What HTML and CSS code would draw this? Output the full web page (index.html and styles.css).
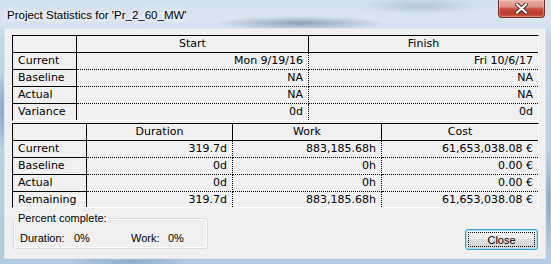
FILE: index.html
```html
<!DOCTYPE html>
<html lang="en">
<head>
<meta charset="utf-8">
<title>Project Statistics</title>
<link rel="stylesheet" href="styles.css">
</head>
<body>
<div class="window">
  <header class="titlebar">
    <span class="title">Project Statistics for 'Pr_2_60_MW'</span>
    <button class="close-x" aria-label="Close window">
      <svg width="13" height="11" viewBox="0 0 13 11">
        <path d="M2 1.5 L11 9.5 M11 1.5 L2 9.5" stroke="#3a2a28" stroke-width="3.8" stroke-linecap="square"/>
        <path d="M2 1.5 L11 9.5 M11 1.5 L2 9.5" stroke="#ffffff" stroke-width="2.1" stroke-linecap="square"/>
      </svg>
    </button>
  </header>
  <main class="client">
    <div class="grid g-dates">
      <div class="l h"></div><div class="h">Start</div><div class="h last">Finish</div>
      <div class="l">Current</div><div class="v">Mon 9/19/16</div><div class="v last">Fri 10/6/17</div>
      <div class="l">Baseline</div><div class="v">NA</div><div class="v last">NA</div>
      <div class="l">Actual</div><div class="v">NA</div><div class="v last">NA</div>
      <div class="l end">Variance</div><div class="v end">0d</div><div class="v last end">0d</div>
    </div>
    <div class="grid g-work">
      <div class="l h"></div><div class="h">Duration</div><div class="h">Work</div><div class="h last">Cost</div>
      <div class="l">Current</div><div class="v">319.7d</div><div class="v">883,185.68h</div><div class="v last">61,653,038.08 €</div>
      <div class="l">Baseline</div><div class="v">0d</div><div class="v">0h</div><div class="v last">0.00 €</div>
      <div class="l">Actual</div><div class="v">0d</div><div class="v">0h</div><div class="v last">0.00 €</div>
      <div class="l end">Remaining</div><div class="v end">319.7d</div><div class="v end">883,185.68h</div><div class="v last end">61,653,038.08 €</div>
    </div>
    <div class="bottom">
      <fieldset class="group">
        <legend>Percent complete:</legend>
        <div class="pc-row">
          <span class="pc-k1">Duration:</span><span class="pc-v1">0%</span><span class="pc-k2">Work:</span><span>0%</span>
        </div>
      </fieldset>
      <button class="btn">Close</button>
    </div>
  </main>
</div>
</body>
</html>
```
FILE: styles.css
```css
* { box-sizing: border-box; }
html, body { margin: 0; padding: 0; }
body {
  width: 551px;
  height: 264px;
  overflow: hidden;
  font-family: "Liberation Sans", Arial, sans-serif;
  background:
    radial-gradient(ellipse 85px 7px at 300px 23px, rgba(60, 80, 115, 0.45), rgba(60, 80, 115, 0) 100%),
    radial-gradient(ellipse 60px 8px at 420px 6px, rgba(90, 110, 140, 0.25), rgba(90, 110, 140, 0) 100%),
    radial-gradient(ellipse 6px 40px at 2px 110px, rgba(70, 110, 160, 0.45), rgba(70, 110, 160, 0) 100%),
    radial-gradient(ellipse 60px 6px at 130px 262px, rgba(80, 120, 170, 0.4), rgba(80, 120, 170, 0) 100%),
    radial-gradient(ellipse 6px 50px at 549px 200px, rgba(70, 110, 160, 0.4), rgba(70, 110, 160, 0) 100%),
    linear-gradient(180deg, #d2dfed 0px, #dbe5f0 20px, #c3d4e7 40px, #b6cae0 264px);
}
.window {
  display: flex;
  flex-direction: column;
  height: 264px;
}
.titlebar {
  height: 28px;
  display: flex;
  align-items: flex-start;
  flex: none;
}
.title {
  flex: 1;
  padding: 2px 0 0 7px;
  line-height: 26px;
  font-size: 11.5px;
  color: #000;
  white-space: nowrap;
  text-shadow: 0 0 5px #fff, 0 0 9px rgba(255, 255, 255, 0.9);
}
.close-x {
  width: 47px;
  height: 18px;
  margin-right: 6px;
  padding: 0;
  border: 1px solid #6e3129;
  border-top: 0;
  border-radius: 0 0 4px 4px;
  background: linear-gradient(180deg, #eab0a3 0%, #dd9080 42%, #c85442 50%, #b9392b 78%, #cc5a40 100%);
  box-shadow: inset 0 0 0 1px rgba(255, 220, 210, 0.35);
  display: flex;
  align-items: center;
  justify-content: center;
}
.close-x svg { display: block; margin-top: -1px; }
.client {
  flex: 1;
  margin: 0 5px 5px 4px;
  border: 1px solid #dfe5ec;
  background: #f0f0f0;
  padding: 6px 6px 0 7px;
}
.grid {
  display: grid;
  width: 527px;
  background: #f0f0f0;
  border-top: 1px solid #000;
  border-left: 1px solid #000;
  border-right: 1px solid #fff;
  border-bottom: 1px solid #fff;
  font-family: "DejaVu Sans", Verdana, sans-serif;
  font-size: 11px;
  color: #000;
}
.g-dates {
  grid-template-columns: 64px 232px 229px;
  grid-template-rows: 17px 17px 17px 17px 16px;
}
.g-work {
  margin-top: 2px;
  grid-template-columns: 74px 146px 149px 156px;
  grid-template-rows: 17px 17px 17px 17px 15px;
}
.grid > div {
  line-height: 16px;
  white-space: nowrap;
  overflow: hidden;
}
.v {
  text-align: right;
  padding-right: 5px;
  border-right: 1px dotted #000;
  border-bottom: 1px dotted #000;
}
.l {
  padding-left: 5px;
  border-right: 1px solid #000;
  border-bottom: 1px solid #000;
}
.h {
  text-align: center;
  border-right: 1px solid #000;
  border-bottom: 1px solid #000;
}
.grid > .last { border-right: 0; }
.grid > .end { border-bottom: 0; }
.bottom {
  display: flex;
  justify-content: space-between;
  align-items: flex-start;
  width: 527px;
}
.group {
  margin: 3px 0 0 1px;
  width: 195px;
  height: 38px;
  padding: 0;
  border: 1px solid #d5dfe5;
  border-radius: 3px;
  box-shadow: inset 0 0 0 1px #fff;
  font-size: 11px;
  color: #000;
}
.group legend {
  margin-left: 2px;
  padding: 0 2px;
  line-height: 15px;
  font-size: 11px;
}
.pc-row {
  display: flex;
  margin-top: 5px;
  padding-left: 6px;
  line-height: 15px;
  white-space: nowrap;
}
.pc-k1 { width: 54px; }
.pc-v1 { width: 57px; }
.pc-k2 { width: 37px; }
.btn {
  margin: 21px 1px 0 0;
  width: 73px;
  height: 21px;
  padding: 0;
  border: 1px solid #3d9fd3;
  border-radius: 3px;
  background: linear-gradient(180deg, #f4f4f4 0%, #ececec 45%, #dfdfdf 50%, #d3d3d3 100%);
  box-shadow: inset 0 0 0 1px #a6def5;
  font-family: "Liberation Sans", Arial, sans-serif;
  font-size: 11px;
  color: #000;
  outline: 1px dotted #000;
  outline-offset: -4px;
}
```
